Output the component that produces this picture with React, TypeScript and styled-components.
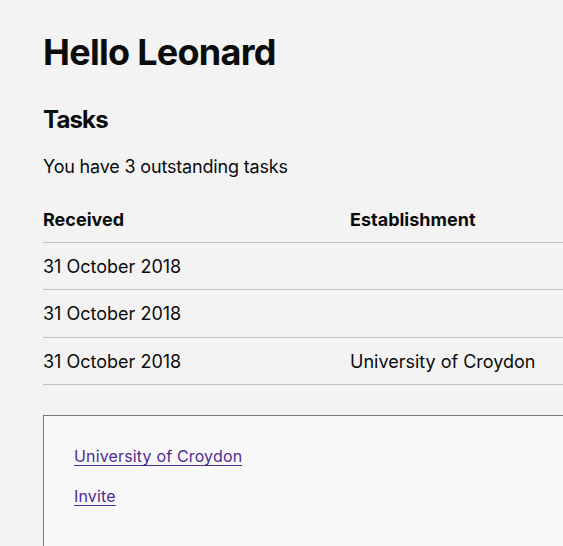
import React from "react";
import styled, { createGlobalStyle } from "styled-components";

const Global = createGlobalStyle`
  html, body { margin: 0; padding: 0; background: #f3f3f3; }
  body { font-family: Inter, "Noto Sans", sans-serif; color: #0b0c0c; overflow: hidden; }
`;

const Page = styled.main`
  padding: 31px 0 0 43px;
  width: 700px;
`;

const Title = styled.h1`
  font-size: 36px;
  font-weight: 700;
  letter-spacing: -0.02em;
  line-height: 43px;
  margin: 0 0 31px;
`;

const SubTitle = styled.h2`
  font-size: 24px;
  font-weight: 700;
  letter-spacing: -0.035em;
  line-height: 30px;
  margin: 0 0 18px;
`;

const Lead = styled.p`
  font-size: 18px;
  letter-spacing: -0.01em;
  line-height: 27px;
  margin: 0 0 15px;
`;

const Table = styled.div`
  display: grid;
  grid-template-columns: 307px 1fr;
  font-size: 18px;
  line-height: 27px;
`;

const Cell = styled.div<{ $head?: boolean }>`
  padding: ${(p) => (p.$head ? "11px 0 9px" : "10px 0 9.33px")};
  border-bottom: 1px solid #bfc1c3;
  font-weight: ${(p) => (p.$head ? 700 : 400)};
`;

const Card = styled.section`
  margin-top: 30px;
  border: 1px solid #777;
  background: #f8f8f8;
  padding: 28px 30px 40px;
  height: 200px;
`;

const LinkItem = styled.a`
  display: block;
  font-size: 16px;
  letter-spacing: 0.01em;
  line-height: 24px;
  color: #4c2c92;
  text-decoration: underline;
  text-underline-offset: 3px;
  margin-bottom: 16px;
`;

const rows = [
  ["31 October 2018", ""],
  ["31 October 2018", ""],
  ["31 October 2018", "University of Croydon"],
];

export default function App() {
  return (
    <>
      <Global />
      <Page>
        <Title>Hello Leonard</Title>
        <SubTitle>Tasks</SubTitle>
        <Lead>You have 3 outstanding tasks</Lead>
        <Table>
          <Cell $head>Received</Cell>
          <Cell $head>Establishment</Cell>
          {rows.map((r, i) => (
            <React.Fragment key={i}>
              <Cell>{r[0]}</Cell>
              <Cell>{r[1]}</Cell>
            </React.Fragment>
          ))}
        </Table>
        <Card>
          <LinkItem href="#">University of Croydon</LinkItem>
          <LinkItem href="#">Invite</LinkItem>
        </Card>
      </Page>
    </>
  );
}
